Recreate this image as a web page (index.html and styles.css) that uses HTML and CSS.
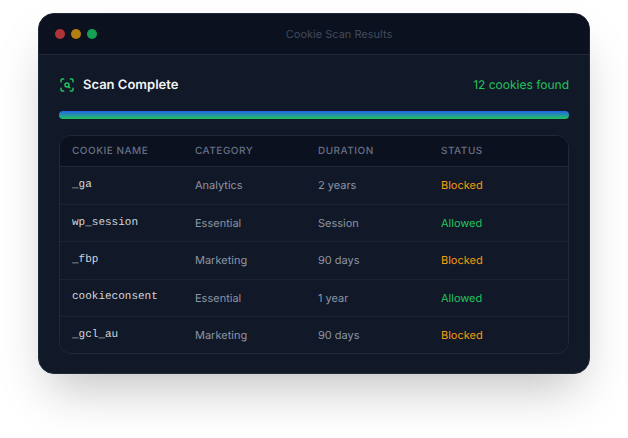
FILE: index.html
```html
<!DOCTYPE html>
<html lang="en">
<head>
  <meta charset="UTF-8" />
  <title>Cookie Scan Results</title>
  <link rel="stylesheet" href="styles.css">
</head>
<body>

  <div class="window">
    <div class="titlebar">
      <div class="dots">
        <span class="dot dot-red"></span>
        <span class="dot dot-yellow"></span>
        <span class="dot dot-green"></span>
      </div>
      <div class="window-title">Cookie Scan Results</div>
    </div>

    <div class="content">
      <div class="scan-head">
        <div class="scan-title">
          <svg class="scan-icon" viewBox="0 0 24 24" fill="none" stroke="currentColor" stroke-width="2.25" stroke-linecap="round" stroke-linejoin="round">
            <path d="M3 7V5a2 2 0 0 1 2-2h2"/>
            <path d="M17 3h2a2 2 0 0 1 2 2v2"/>
            <path d="M21 17v2a2 2 0 0 1-2 2h-2"/>
            <path d="M7 21H5a2 2 0 0 1-2-2v-2"/>
            <circle cx="12" cy="12" r="3"/>
            <path d="m16 16-1.9-1.9"/>
          </svg>
          <span>Scan Complete</span>
        </div>
        <div class="scan-count">12 cookies found</div>
      </div>

      <div class="progress"></div>

      <div class="table">
        <div class="row row-head">
          <div>Cookie Name</div>
          <div>Category</div>
          <div>Duration</div>
          <div>Status</div>
        </div>
        <div class="row">
          <div class="name">_ga</div>
          <div>Analytics</div>
          <div>2 years</div>
          <div class="blocked">Blocked</div>
        </div>
        <div class="row">
          <div class="name">wp_session</div>
          <div>Essential</div>
          <div>Session</div>
          <div class="allowed">Allowed</div>
        </div>
        <div class="row">
          <div class="name">_fbp</div>
          <div>Marketing</div>
          <div>90 days</div>
          <div class="blocked">Blocked</div>
        </div>
        <div class="row">
          <div class="name">cookieconsent</div>
          <div>Essential</div>
          <div>1 year</div>
          <div class="allowed">Allowed</div>
        </div>
        <div class="row">
          <div class="name">_gcl_au</div>
          <div>Marketing</div>
          <div>90 days</div>
          <div class="blocked">Blocked</div>
        </div>
      </div>
    </div>
  </div>

</body>
</html>
```

FILE: styles.css
```css
html, body {
  height: 100%;
}

body {
  box-sizing: border-box;
  margin: 0;
  padding: 13px 38px 0;
  background: #fff;
  font-family: Inter, sans-serif;
  text-rendering: geometricPrecision;
}

.window {
  background: #111827;
  border: 1px solid #1f2937;
  border-radius: 16px;
  overflow: hidden;
  box-shadow: 0 25px 50px -12px rgba(0,0,0,0.25);
}

.titlebar {
  display: flex;
  align-items: center;
  gap: 8px;
  height: 40px;
  padding: 0 16px;
  background: #0b111e;
  border-bottom: 1px solid #1f2937;
}

.dots {
  display: flex;
  gap: 6px;
}

.dot {
  width: 10px;
  height: 10px;
  border-radius: 50%;
}

.dot-red { background: #ae3439; }
.dot-yellow { background: #b1800f; }
.dot-green { background: #16a054; }

.window-title {
  flex: 1;
  text-align: center;
  font-size: 11px;
  color: #414b5c;
}

.content {
  padding: 20px 20px 19px;
}

.scan-head {
  display: flex;
  justify-content: space-between;
  align-items: center;
  height: 20px;
}

.scan-title {
  display: flex;
  align-items: center;
  gap: 8px;
  font-size: 13px;
  font-weight: 600;
  color: #f3f4f6;
}

.scan-icon {
  width: 16px;
  height: 16px;
  color: #22c55e;
}

.scan-count {
  padding-bottom: 1px;
  font-size: 12px;
  color: #22c55e;
}

.progress {
  height: 8px;
  margin-top: 16px;
  border-radius: 4px;
  background: linear-gradient(180deg, #2563eb, #22c55e);
}

.table {
  margin-top: 16px;
  border: 1px solid #1f2937;
  border-radius: 12px;
  overflow: hidden;
}

.row {
  box-sizing: border-box;
  display: grid;
  grid-template-columns: repeat(4, 1fr);
  gap: 8px;
  align-items: center;
  height: 37.25px;
  padding: 0 12px;
  border-top: 1px solid #1a2332;
  font-size: 11px;
  color: #8b95a5;
}

.row-head {
  height: 30.8px;
  border-top: 0;
  border-bottom: 1px solid #1f2937;
  background: #0b111e;
  font-size: 10px;
  font-weight: 500;
  letter-spacing: 0.5px;
  text-transform: uppercase;
  color: #667085;
}

.row-head + .row {
  border-top: 0;
}

.name {
  padding-bottom: 0.5px;
  font-family: "Liberation Mono", monospace;
  color: #d1d5db;
}

.blocked { color: #f59e0b; }
.allowed { color: #22c55e; }
```
